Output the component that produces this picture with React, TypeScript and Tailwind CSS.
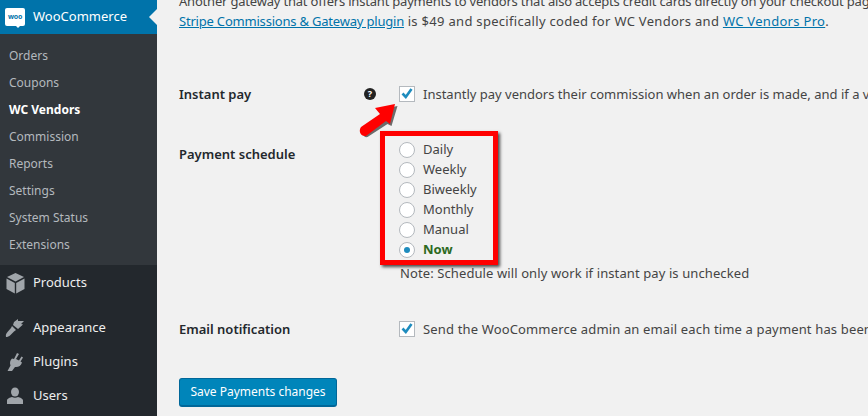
import React from 'react';

const subItems = ['Orders', 'Coupons', 'WC Vendors', 'Commission', 'Reports', 'Settings', 'System Status', 'Extensions'];
const schedules = ['Daily', 'Weekly', 'Biweekly', 'Monthly', 'Manual', 'Now'];

const BoxIcon = () => (
  <svg width="19" height="22" viewBox="0 0 19 22" fill="#a0a5aa">
    <path d="M9.5 1 L18 5 L9.5 9.5 L1 5 Z" />
    <path d="M0.5 6.5 L8.8 11 V21.5 L0.5 17 Z" />
    <path d="M18.5 6.5 L10.2 11 V21.5 L18.5 17 Z" />
  </svg>
);

const BrushIcon = () => (
  <svg width="20" height="20" viewBox="0 0 20 20" fill="#a0a5aa">
    <path d="M9 4 L13 1 L13 3 L19 3 L16 6 L18 6.5 L13 11 L8 7 Z" />
    <path d="M7 8 L11 12 L9 13.5 L5.5 17 C4 18.5 2.5 19 1 19 C0.5 17.5 1 15.5 2.5 14 L6 10 Z" />
  </svg>
);

const PlugIcon = () => (
  <svg width="18" height="20" viewBox="0 0 18 20" fill="#a0a5aa">
    <path d="M11 1 L13 2 L10 7 L13 8.5 L15.5 4.5 L17 5.5 L14.5 9.5 L16 10.5 C15 14 12 15.5 9 15 L6 19 L1.5 19 L4.5 13.5 C3.5 11 4 8 6 6.5 L8 7 Z" />
  </svg>
);

const UserIcon = () => (
  <svg width="16" height="18" viewBox="0 0 16 18" fill="#a0a5aa">
    <ellipse cx="8" cy="5" rx="4" ry="4.5" />
    <path d="M0 17 V13.5 C0 11.5 3 10.5 5 10 C6.5 11 9.5 11 11 10 C13 10.5 16 11.5 16 13.5 V17 Z" />
  </svg>
);

const bottomItems = [
  { label: 'Appearance', icon: <BrushIcon /> },
  { label: 'Plugins', icon: <PlugIcon /> },
  { label: 'Users', icon: <UserIcon /> },
];

const Sidebar = () => (
  <aside className="w-[157px] shrink-0 bg-[#23282d] text-[13px]">
    <div className="relative flex h-[34px] items-center bg-[#0073aa] pl-[5px] text-white">
      <div className="relative flex h-[18px] w-[20px] items-center justify-center rounded-[2px] bg-white text-[7px] font-bold tracking-[-0.2px] text-[#0073aa]">
        woo
        <span className="absolute bottom-[-2px] left-[11px] h-0 w-0 border-x-[2px] border-t-[2px] border-x-transparent border-t-white" />
      </div>
      <span className="ml-[8px]">WooCommerce</span>
      <div className="absolute right-0 top-[9px] h-0 w-0 border-y-[8px] border-r-[8px] border-y-transparent border-r-[#f1f1f1]" />
    </div>
    <ul className="h-[231px] bg-[#32373c] pt-[8px] text-[12px] text-[#b4b9be]">
      {subItems.map((item) => (
        <li
          key={item}
          className={`flex h-[27px] items-center pl-[9px] ${item === 'WC Vendors' ? 'font-bold text-white' : ''}`}
        >
          {item}
        </li>
      ))}
    </ul>
    <div className="flex h-[36px] items-center text-[#eeeeee]">
      <div className="flex w-[33px] justify-center pr-[3px]"><BoxIcon /></div>
      <span>Products</span>
    </div>
    <div className="pt-[10px] text-[#eeeeee]">
      {bottomItems.map((item) => (
        <div key={item.label} className="flex h-[34px] items-center">
          <div className="flex w-[33px] justify-center pr-[3px]">{item.icon}</div>
          <span>{item.label}</span>
        </div>
      ))}
    </div>
  </aside>
);

const Checkbox = () => (
  <span className="flex h-[16px] w-[16px] shrink-0 items-center justify-center border border-[#b4b9be] bg-white">
    <svg width="14" height="14" viewBox="0 0 14 14" fill="none">
      <path d="M2.5 6.5 L5.8 10 L11.5 2" stroke="#1e8cbe" strokeWidth="2.6" />
    </svg>
  </span>
);

const Radio = ({ checked }: { checked?: boolean }) => (
  <span className="flex h-[16px] w-[16px] shrink-0 items-center justify-center rounded-full border border-[#b4b9be] bg-white">
    {checked && <span className="h-[6px] w-[6px] rounded-full bg-[#1e8cbe]" />}
  </span>
);

const App: React.FC = () => {
  return (
    <div
      className="flex h-[416px] w-[868px] overflow-hidden bg-[#f1f1f1] text-[13px] text-[#444444]"
      style={{ fontFamily: '"Noto Sans", "Open Sans", sans-serif' }}
    >
      <Sidebar />
      <main className="relative min-w-0 flex-1 overflow-hidden whitespace-nowrap pl-[22px]">
        <p className="mt-[-9px] h-[20px] leading-[20px] tracking-[-0.2px]">
          Another gateway that offers instant payments to vendors that also accepts credit cards directly on your checkout page
        </p>
        <p className="h-[20px] leading-[20px] tracking-[0.3px]">
          <span className="tracking-[-0.2px] text-[#0073aa] underline">Stripe Commissions &amp; Gateway plugin</span> is $49 and specifically coded for WC Vendors and <span className="text-[#0073aa] underline">WC Vendors Pro</span>.
        </p>

        <div className="mt-[53px] flex h-[20px] items-center leading-[20px]">
          <label className="w-[185px] shrink-0 font-semibold text-[#23282d]">Instant pay</label>
          <span className="flex h-[12px] w-[12px] shrink-0 items-center justify-center rounded-full bg-[#222222] text-[9px] font-bold text-white">?</span>
          <span className="ml-[23px] mr-[8px] flex"><Checkbox /></span>
          <span>Instantly pay vendors their commission when an order is made, and if a vendor</span>
        </div>

        <div className="mt-[36px] flex">
          <label className="h-[20px] w-[220px] shrink-0 pt-[4px] font-semibold leading-[20px] text-[#23282d]">Payment schedule</label>
          <div>
            {schedules.map((s) => (
              <div key={s} className="flex h-[20px] items-center">
                <Radio checked={s === 'Now'} />
                <span className={`ml-[8px] ${s === 'Now' ? 'font-bold text-[#2d6a1f]' : ''}`}>{s}</span>
              </div>
            ))}
            <p className="mt-[3px] ml-[1px] leading-[20px] tracking-[0.1px]">Note: Schedule will only work if instant pay is unchecked</p>
          </div>
        </div>

        <div className="mt-[36px] flex h-[20px] items-center leading-[20px]">
          <label className="w-[220px] shrink-0 font-semibold text-[#23282d]">Email notification</label>
          <span className="mr-[8px] flex"><Checkbox /></span>
          <span className="tracking-[0.15px]">Send the WooCommerce admin an email each time a payment has been made</span>
        </div>

        <button className="mt-[39px] h-[29px] w-[158px] rounded-[3px] border border-b-[2px] border-[#006799] bg-[#0085ba] text-[12px] text-white">
          Save Payments changes
        </button>

        {/* red highlight box and arrow drawn over the form */}
        <div className="absolute left-[223px] top-[131px] h-[134px] w-[118px] border-[5px] border-[#ff0000] shadow-[2px_2px_3px_rgba(0,0,0,0.7)]" />
        <svg className="absolute left-[200px] top-[100px]" width="44" height="40" viewBox="0 0 44 40">
          <path d="M39 5 L33 25 L29 23 L9 36 C5 37 3 32 6 29 L24 16 L19 9 Z" fill="#333333" fillOpacity="0.7" transform="translate(1.5 1)" />
          <path d="M38 4 L33 24 L29 21 L9 36 C4 37 1 31 4 27 L23 14 L18 8 Z" fill="#ff0000" />
        </svg>
      </main>
    </div>
  );
};

export default App;
